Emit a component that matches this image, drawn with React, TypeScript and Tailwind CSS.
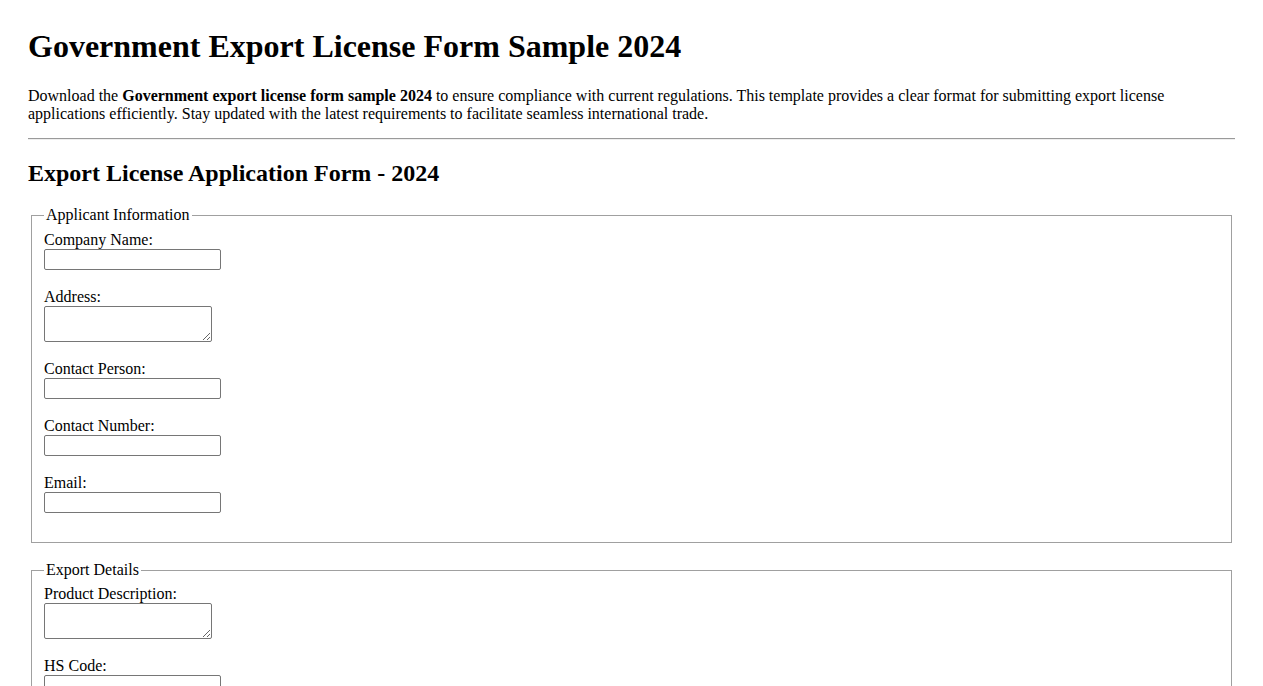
const inputCls =
  "block w-[177px] h-[21px] border border-[#767676] rounded-[2px] bg-white px-[2px] text-[13px]";
const areaCls =
  "block w-[168px] h-[36px] border border-[#767676] rounded-[2px] bg-white px-[2px] text-[13px] resize";

function Field({ label, area }: { label: string; area?: boolean }) {
  return (
    <div className="mb-[18px]">
      <label className="block h-[18px] leading-[18px]">{label}</label>
      {area ? <textarea className={areaCls} /> : <input type="text" className={inputCls} />}
    </div>
  );
}

function Group({ title, className, children }: { title: string; className: string; children: React.ReactNode }) {
  return (
    <fieldset className={"mx-[3px] mb-[18px] border border-[#a0a0a0] px-[12px] " + className}>
      <legend className="px-[2px] leading-[18px]">{title}</legend>
      {children}
    </fieldset>
  );
}

export default function App() {
  return (
    <div className="min-h-screen bg-white px-[28px] pt-[28px] text-[16px] text-black font-['Liberation_Serif',serif]">
      <h1 className="text-[32px] font-bold leading-[36px]">Government Export License Form Sample 2024</h1>
      <p className="mt-[23px] leading-[18px]">
        Download the <strong>Government export license form sample 2024</strong> to ensure compliance with
        current regulations. This template provides a clear format for submitting export license applications
        efficiently. Stay updated with the latest requirements to facilitate seamless international trade.
      </p>
      <hr className="mt-[15px] border-t border-t-[#9a9a9a] border-b border-b-[#eeeeee]" />
      <h2 className="mt-[19px] text-[24px] font-bold leading-[28px]">Export License Application Form - 2024</h2>
      <form className="mt-[19px]">
        <Group title="Applicant Information" className="pt-[7px] pb-[11px]">
          <Field label="Company Name:" />
          <Field label="Address:" area />
          <Field label="Contact Person:" />
          <Field label="Contact Number:" />
          <Field label="Email:" />
        </Group>
        <Group title="Export Details" className="pt-[6px] pb-[10px]">
          <Field label="Product Description:" area />
          <Field label="HS Code:" />
          <Field label="Quantity:" />
          <Field label="Destination Country:" />
        </Group>
      </form>
    </div>
  );
}
